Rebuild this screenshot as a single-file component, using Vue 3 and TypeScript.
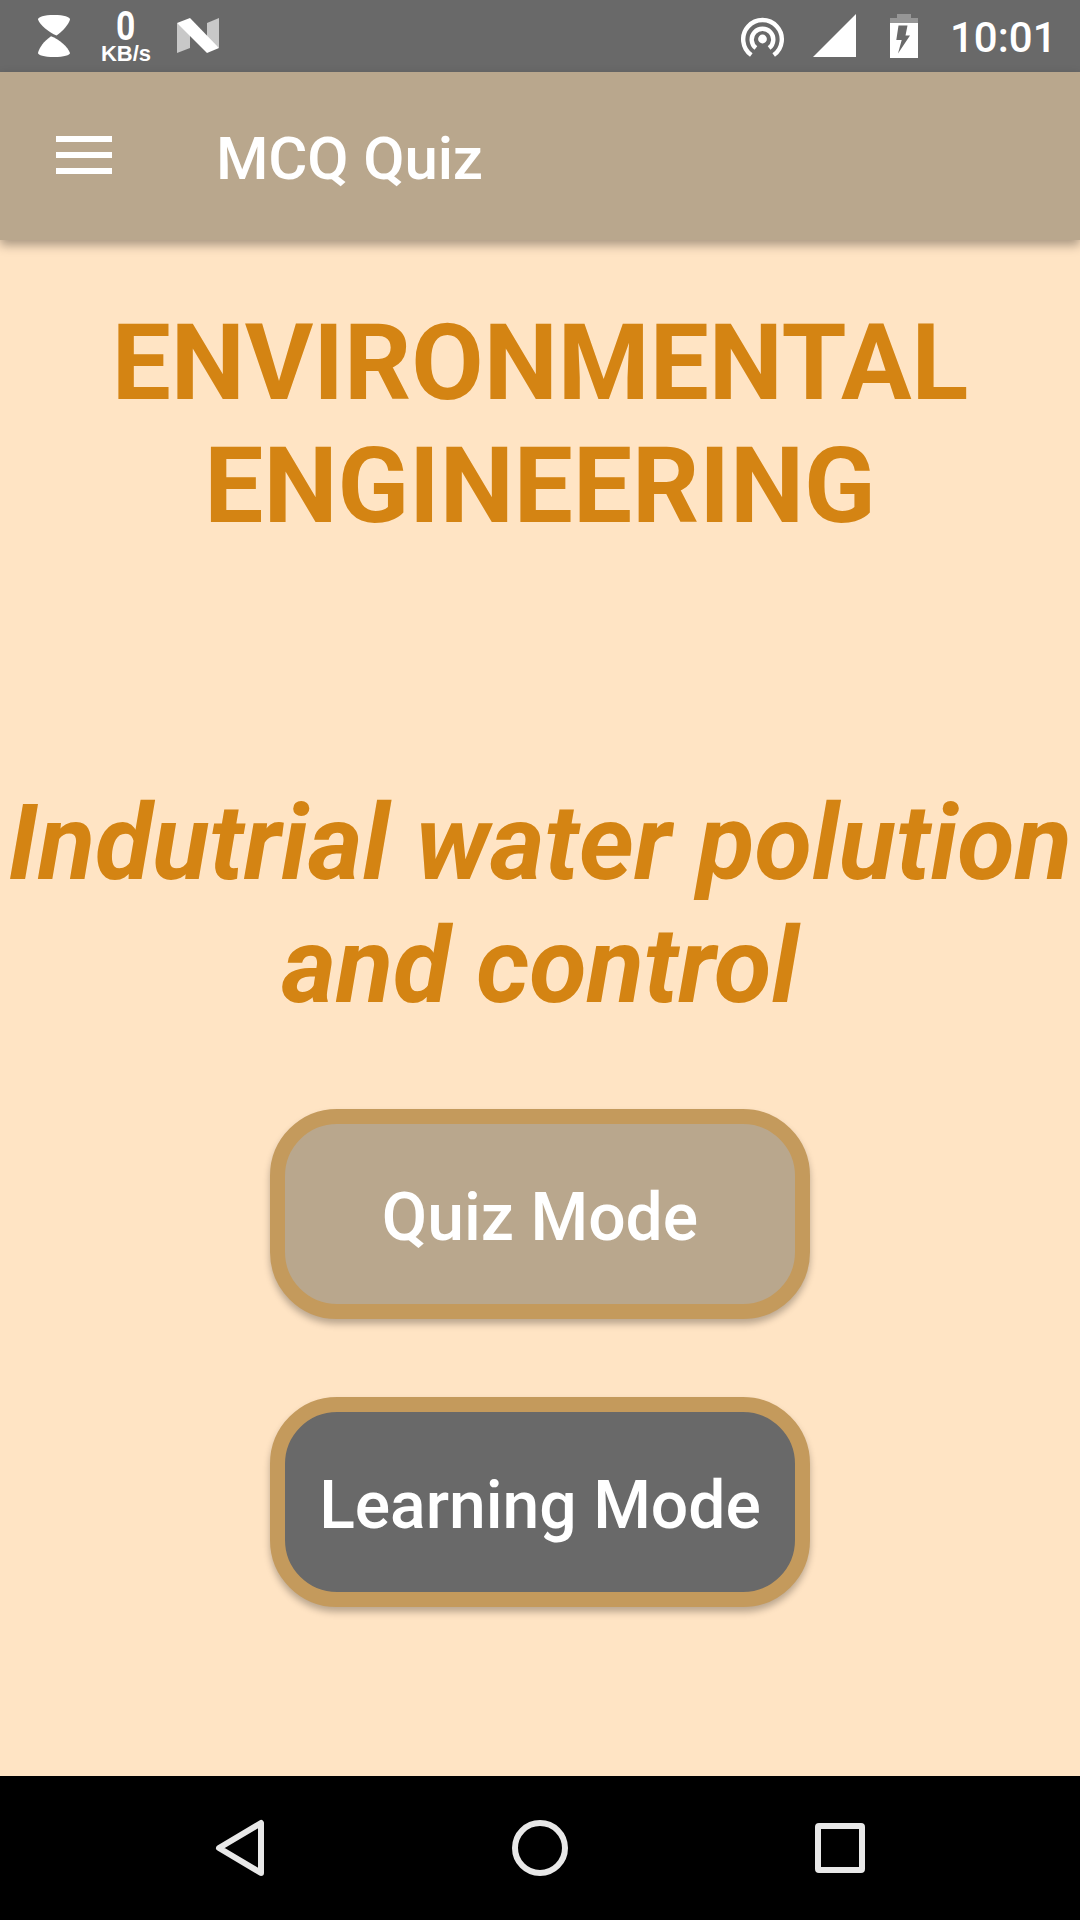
<script setup lang="ts">
const title = 'ENVIRONMENTAL ENGINEERING'
const subject = 'Indutrial water polution and control'
const modes = [
  { id: 'quiz', label: 'Quiz Mode' },
  { id: 'learning', label: 'Learning Mode' },
]
</script>

<template>
  <div class="screen">
    <header class="status">
      <svg class="hourglass" width="32" height="42" viewBox="0 0 32 42" fill="#fff">
        <path d="M0 4.5C0 2 6 0 16 0s16 2 16 4.500C31 9 25 16 18.500 20.500 11 17.500 2 10 0 4.500z" />
        <path d="M0 38C0 40 6 42 16 42s16-2 16-4C30 32 21 24 13 21.200 6 26 1 33 0 38z" />
      </svg>
      <div class="speed">
        <span class="rate">0</span>
        <span class="unit">KB/s</span>
      </div>
      <svg class="nougat" width="42" height="35" viewBox="0 0 42 35">
        <path d="M0 5l13 9v16L0 35z" fill="#c8c8c8" />
        <path d="M30 5l12-5v30l-12-9z" fill="#c8c8c8" />
        <path d="M0 5L13 0l29 30-12 5z" fill="#fff" />
      </svg>
      <svg class="hotspot" width="44" height="42" viewBox="0 0 44 42" fill="none" stroke="#fff" stroke-width="4.4">
        <circle cx="21.5" cy="22" r="4.4" fill="#fff" stroke="none" />
        <path d="M14.9 31.1A10.8 10.8 0 1 1 28.1 31.1" />
        <path d="M10.3 38A19.3 19.3 0 1 1 32.7 38" />
      </svg>
      <svg class="signal" width="43" height="43" viewBox="0 0 43 43"><path d="M0 43L43 0v43z" fill="#fff" /></svg>
      <svg class="battery" width="28" height="44" viewBox="0 0 28 44">
        <path d="M0 4h7V0h14v4h7v5H0z" fill="#969696" />
        <path d="M0 9h28v35H0z" fill="#fff" />
        <path d="M8.500 11.500h9l-2 10H20L8 39.500 11.700 26H6.300z" fill="#696969" />
      </svg>
      <span class="clock">10:01</span>
    </header>

    <nav class="toolbar">
      <button class="menu" aria-label="Menu"><i /><i /><i /></button>
      <span class="app-name">MCQ Quiz</span>
    </nav>

    <main class="content">
      <h1>{{ title }}</h1>
      <h2>{{ subject }}</h2>
      <div class="modes">
        <button v-for="m in modes" :key="m.id" class="mode" :class="m.id">{{ m.label }}</button>
      </div>
    </main>

    <footer class="system-nav">
      <svg width="56" height="60" viewBox="0 0 56 60"><path d="M49 5v50L7 30z" /></svg>
      <svg width="56" height="60" viewBox="0 0 56 60"><circle cx="28" cy="30" r="25" /></svg>
      <svg width="56" height="60" viewBox="0 0 56 60"><rect x="6" y="8" width="44" height="44" rx="1" /></svg>
    </footer>
  </div>
</template>

<style>
body {
  margin: 0;
}
</style>

<style scoped>
.screen {
  width: 1080px;
  height: 1920px;
  display: flex;
  flex-direction: column;
  overflow: hidden;
  background: #ffe4c4;
  font-family: Roboto, sans-serif;
}
.status {
  flex: none;
  box-sizing: border-box;
  height: 72px;
  display: flex;
  align-items: flex-start;
  background: #696969;
  color: #fff;
}
.status svg {
  flex: none;
}
.hourglass {
  margin: 15px 0 0 38px;
}
.speed {
  width: 60px;
  margin: 8px 0 0 26px;
  display: flex;
  flex-direction: column;
  align-items: center;
}
.rate {
  font-size: 41px;
  line-height: 36px;
  font-weight: 700;
  transform: scaleX(0.82);
}
.unit {
  font: 700 22px/20px "Liberation Sans", Arial, sans-serif;
}
.nougat {
  margin: 18px 0 0 21px;
}
.hotspot {
  margin: 17px 0 0 auto;
}
.signal {
  margin: 14px 0 0 28px;
}
.battery {
  margin: 14px 0 0 34px;
}
.clock {
  width: 130px;
  padding: 13px 29px 0 0;
  box-sizing: border-box;
  margin-left: 32px;
  text-align: right;
  font-size: 42px;
  line-height: 49px;
  font-weight: 500;
}
.toolbar {
  flex: none;
  height: 168px;
  display: flex;
  align-items: flex-start;
  background: #b9a78d;
  box-shadow: 0 5px 10px rgba(0, 0, 0, 0.34);
}
.menu {
  width: 56px;
  height: 38px;
  margin: 64px 0 0 56px;
  padding: 0;
  border: 0;
  background: none;
  display: flex;
  flex-direction: column;
  justify-content: space-between;
}
.menu i {
  height: 6px;
  width: 56px;
  background: #fff;
}
.app-name {
  margin: 52px 0 0 104px;
  font-size: 60px;
  line-height: 70px;
  font-weight: 500;
  letter-spacing: -0.15px;
  color: #fff;
}
.content {
  flex: 1;
  display: flex;
  flex-direction: column;
  align-items: center;
  color: #d48413;
}
h1,
h2 {
  margin: 0;
  width: 1080px;
  font-size: 105px;
  line-height: 123px;
  font-weight: 700;
  text-align: center;
}
h1 {
  padding-top: 62px;
}
h2 {
  padding-top: 234px;
  font-style: italic;
}
.modes {
  display: flex;
  flex-direction: column;
  gap: 78px;
  margin-top: 81px;
}
.mode {
  box-sizing: border-box;
  width: 540px;
  height: 210px;
  padding: 7px 0 0;
  border: 15px solid #c49a5c;
  border-radius: 67px;
  font: 500 66px/77px Roboto, sans-serif;
  color: #fff;
  box-shadow: 0 5px 7px rgba(0, 0, 0, 0.27);
}
.quiz {
  background: #b9a78d;
}
.learning {
  background: #696969;
}
.system-nav {
  flex: none;
  height: 144px;
  display: flex;
  justify-content: center;
  align-items: center;
  gap: 244px;
  background: #000;
}
.system-nav svg {
  fill: none;
  stroke: #e8e8e8;
  stroke-width: 6;
  stroke-linejoin: round;
}
</style>
